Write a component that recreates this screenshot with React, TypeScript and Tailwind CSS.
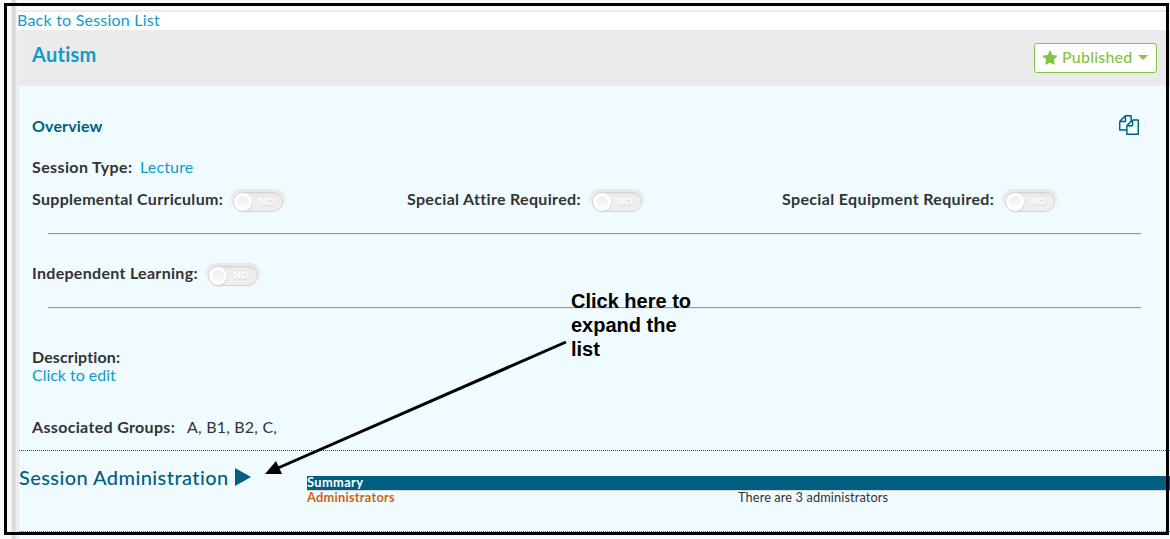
import type { ReactNode } from "react";

function Toggle({ id }: { id: string }) {
  return (
    <svg className="shrink-0" width="56" height="26" viewBox="0 0 56 26" role="img" aria-label="No">
      <defs>
        <linearGradient id={`${id}-tray`} x1="0" y1="0" x2="0" y2="1">
          <stop offset="0" stopColor="#e5e7e8" />
          <stop offset="0.5" stopColor="#eceeef" />
          <stop offset="1" stopColor="#f0fbff" stopOpacity="0" />
        </linearGradient>
        <linearGradient id={`${id}-track`} x1="0" y1="0" x2="0" y2="1">
          <stop offset="0" stopColor="#e4e4e4" />
          <stop offset="0.25" stopColor="#eeeeee" />
          <stop offset="1" stopColor="#eeeeee" />
        </linearGradient>
        <linearGradient id={`${id}-dot`} x1="0" y1="0" x2="0" y2="1">
          <stop offset="0" stopColor="#eeeeee" />
          <stop offset="1" stopColor="#fbfbfb" />
        </linearGradient>
      </defs>
      <rect x="0" y="0" width="56" height="22" rx="11" fill={`url(#${id}-tray)`} />
      <rect x="3.5" y="3.5" width="49" height="19" rx="9.5" fill={`url(#${id}-track)`} stroke="#d2d2d2" />
      <circle cx="13.5" cy="14.2" r="9.2" fill="#cfd3d5" opacity="0.65" />
      <circle cx="13" cy="13" r="9" fill="#ffffff" />
      <circle cx="13" cy="13" r="6" fill={`url(#${id}-dot)`} />
      <text x="28.5" y="16.8" fontSize="9.5" fontWeight="900" fontFamily="Lato, sans-serif" textLength="15" fill="#d4d4d4">NO</text>
      <text x="28.5" y="16" fontSize="9.5" fontWeight="900" fontFamily="Lato, sans-serif" textLength="15" fill="#ffffff">NO</text>
    </svg>
  );
}

function Label({ children, className = "" }: { children: ReactNode; className?: string }) {
  return <span className={`font-bold text-[#333333] ${className}`}>{children}</span>;
}

export default function App() {
  return (
    <div className="relative flex h-[539px] w-[1170px] overflow-hidden bg-[#fafafc] font-['Lato',sans-serif] text-[16px] leading-[18px] whitespace-nowrap text-[#333333]">
      <div className="w-[11px] shrink-0" />
      <div className="w-1.5 shrink-0 bg-linear-to-r from-[#ececee] via-[#d2d2d4] to-[#f6f6f8]" />
      <div className="flex min-w-0 flex-1 flex-col">
        <div className="h-3 shrink-0 border-b-2 border-[#ececec]" />
        <div className="h-[18px] shrink-0 bg-white text-[#0d9ccc]">
          <a className="block -translate-y-px tracking-[0.22px]">Back to Session List</a>
        </div>
        <header className="flex h-14 shrink-0 items-center justify-between bg-[#ebebeb] pr-[13px] pl-[15px]">
          <h1 className="mb-[9px] text-[20px] leading-6 font-bold tracking-[0.25px] text-[#0d9ccc]">Autism</h1>
          <button className="flex h-[30px] w-[123px] items-center rounded-[3px] border border-[#84c441] bg-white pb-0.5 pl-[7px] text-[#84c441]">
            <svg className="mr-1 shrink-0" width="16" height="15" viewBox="0 0 26 25" fill="currentColor">
              <path d="M13 0l4 8.200 9 1.300-6.500 6.300L21 25l-8-4.200L5 25l1.500-9.200L0 9.500l9-1.300z" />
            </svg>
            <span className="font-medium tracking-[0.2px]">Published</span>
            <svg className="ml-1.5" width="10" height="5" viewBox="0 0 10 5" fill="currentColor">
              <path d="M0 0h10L5 5z" />
            </svg>
          </button>
        </header>
        <main className="flex flex-1 flex-col border-l-2 border-[#ebebeb] bg-[#f0fbff]">
          <section className="flex h-[365px] shrink-0 flex-col border-b border-dotted border-[#005f7f] pl-[13px]">
            <div className="flex h-[72px] items-start justify-between pt-[28px] pr-[31px]">
              <h2 className="mt-[3px] font-bold tracking-[0.15px] text-[#005f7f]">Overview</h2>
              <svg className="mt-px" width="20" height="20" viewBox="0 0 1792 1792" fill="#005f7f">
                <path d="M1696 384q40 0 68 28t28 68v1216q0 40-28 68t-68 28H736q-40 0-68-28t-28-68v-288H96q-40 0-68-28t-28-68V640q0-40 20-88t48-76L476 68q28-28 76-48t88-20h416q40 0 68 28t28 68v328q68-40 128-40h416zm-544 213L853 896h299V597zM512 213L213 512h299V213zm196 647l316-316V128H640v416q0 40-28 68t-68 28H128v640h512v-256q0-40 20-88t48-76zm956 804V512h-384v416q0 40-28 68t-68 28H768v640h896z" />
              </svg>
            </div>
            <div className="flex h-[26px]">
              <Label className="w-[108px] tracking-[0.38px]">Session Type:</Label>
              <a className="tracking-[0.15px] text-[#0d9ccc]">Lecture</a>
            </div>
            <div className="flex h-[49px] items-start pt-[5px]">
              <div className="flex w-[375px]">
                <Label className="mt-px w-[198px] tracking-[0.3px]">Supplemental Curriculum:</Label>
                <Toggle id="curriculum" />
              </div>
              <div className="flex w-[375px]">
                <Label className="mt-px w-[182px] tracking-[0.32px]">Special Attire Required:</Label>
                <Toggle id="attire" />
              </div>
              <div className="flex">
                <Label className="mt-px w-[220px] tracking-[0.35px]">Special Equipment Required:</Label>
                <Toggle id="equipment" />
              </div>
            </div>
            <hr className="mr-[29px] ml-4 h-0.5 shrink-0 border-t border-b border-t-[#999999] border-b-[#e8ebec]" />
            <div className="flex h-[72px] items-start pt-[28px]">
              <Label className="mt-px w-[173px] tracking-[0.3px]">Independent Learning:</Label>
              <Toggle id="learning" />
            </div>
            <hr className="mr-[29px] ml-4 h-0.5 shrink-0 border-t border-b border-t-[#999999] border-b-[#e8ebec]" />
            <div className="flex h-[110px] flex-col pt-[39px]">
              <Label className="tracking-[0.12px]">Description:</Label>
              <a className="tracking-[-0.02px] text-[#0d9ccc]">Click to edit</a>
            </div>
            <div className="-mt-px flex">
              <Label className="w-[155px] tracking-[0.33px]">Associated Groups:</Label>
              <span className="tracking-[0.2px]">A, B1, B2, C,</span>
            </div>
          </section>
          <section className="flex h-[81px] shrink-0 border-b border-dotted border-[#b85c13]">
            <div className="flex w-[288px] shrink-0 items-start pt-[14px]">
              <h2 className="w-[216px] text-[20px] leading-6 font-medium tracking-[0.42px] text-[#005f7f]">Session Administration</h2>
              <svg className="mt-[3px]" width="16" height="18" viewBox="0 0 16 18" fill="#005f7f">
                <path d="M0 0l16 9L0 18z" />
              </svg>
            </div>
            <div className="flex-1 pt-[25px] text-[12.8px] leading-[14px]">
              <div className="h-[15px] border-b border-[#d5d9db] bg-[#005f7f] font-bold tracking-[0.4px] text-white">
                <span className="block -translate-y-px">Summary</span>
              </div>
              <div className="-mt-px flex">
                <span className="w-[431px] font-bold tracking-[0.25px] text-[#cc6611]">Administrators</span>
                <span className="tracking-[0.1px]">There are 3 administrators</span>
              </div>
            </div>
          </section>
        </main>
      </div>
      <p className="absolute top-[289px] left-[571px] font-['Liberation_Sans',sans-serif] text-[20px] leading-6 font-bold text-black">
        Click here to<br />expand the<br />list
      </p>
      <svg className="absolute top-[330px] left-[255px]" width="320" height="150" viewBox="255 330 320 150">
        <path d="M566 342L278 468" stroke="#000000" strokeWidth="3" />
        <path d="M265 474l11-13 6 13z" fill="#000000" />
      </svg>
      <div className="absolute top-[3px] left-1 h-[532px] w-[1165px] border-3 border-black" />
    </div>
  );
}
